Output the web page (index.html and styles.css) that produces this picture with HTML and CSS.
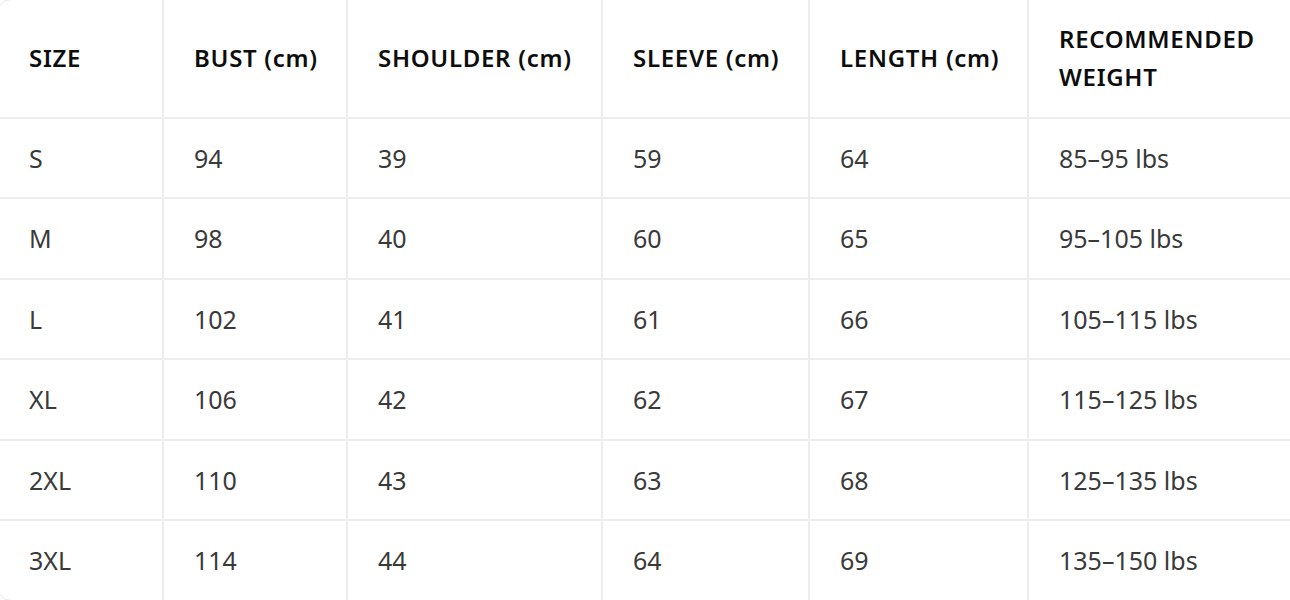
FILE: index.html
```html
<!DOCTYPE html>
<html>
<head>
<meta charset="utf-8">
<link rel="stylesheet" href="styles.css">
</head>
<body>
<div class="wrap">
<table class="size-table">
<colgroup>
<col class="c1"><col class="c2"><col class="c3"><col class="c4"><col class="c5"><col class="c6">
</colgroup>
<thead>
<tr><th>SIZE</th><th>BUST (cm)</th><th>SHOULDER (cm)</th><th>SLEEVE (cm)</th><th>LENGTH (cm)</th><th>RECOMMENDED<br>WEIGHT</th></tr>
</thead>
<tbody>
<tr><td>S</td><td>94</td><td>39</td><td>59</td><td>64</td><td>85–95 lbs</td></tr>
<tr><td>M</td><td>98</td><td>40</td><td>60</td><td>65</td><td>95–105 lbs</td></tr>
<tr><td>L</td><td>102</td><td>41</td><td>61</td><td>66</td><td>105–115 lbs</td></tr>
<tr><td>XL</td><td>106</td><td>42</td><td>62</td><td>67</td><td>115–125 lbs</td></tr>
<tr><td>2XL</td><td>110</td><td>43</td><td>63</td><td>68</td><td>125–135 lbs</td></tr>
<tr><td>3XL</td><td>114</td><td>44</td><td>64</td><td>69</td><td>135–150 lbs</td></tr>
</tbody>
</table>
</div>
</body>
</html>
```
FILE: styles.css
```css
html, body {
  margin: 0;
  padding: 0;
  background: #ffffff;
  overflow: hidden;
}
body {
  font-family: "Noto Sans", "Open Sans", sans-serif;
}
.wrap {
  margin: -1px 0 0 -3px;
  width: 1340px;
  border: 1px solid #e6e6e6;
  border-radius: 14px;
  overflow: hidden;
}
.size-table {
  border-collapse: collapse;
  table-layout: fixed;
  width: 1340px;
  font-size: 25px;
  line-height: 38px;
}
.c1 { width: 165px; }
.c2 { width: 184px; }
.c3 { width: 255px; }
.c4 { width: 207px; }
.c5 { width: 219px; }
.c6 { width: 310px; }
.size-table th,
.size-table td {
  text-align: left;
  padding: 20.25px 20px 20.25px 30px;
  border-right: 2px solid #ededed;
  border-bottom: 2px solid #ededed;
  vertical-align: middle;
  white-space: nowrap;
}
.size-table th:first-child,
.size-table td:first-child {
  padding-left: 31px;
}
.size-table th {
  font-weight: 600;
  font-size: 24px;
  color: #0d0d0d;
  letter-spacing: 0.7px;
}
.size-table td {
  font-weight: 400;
  color: #3a3a3a;
}
.size-table tr:last-child td {
  border-bottom: none;
}
```
